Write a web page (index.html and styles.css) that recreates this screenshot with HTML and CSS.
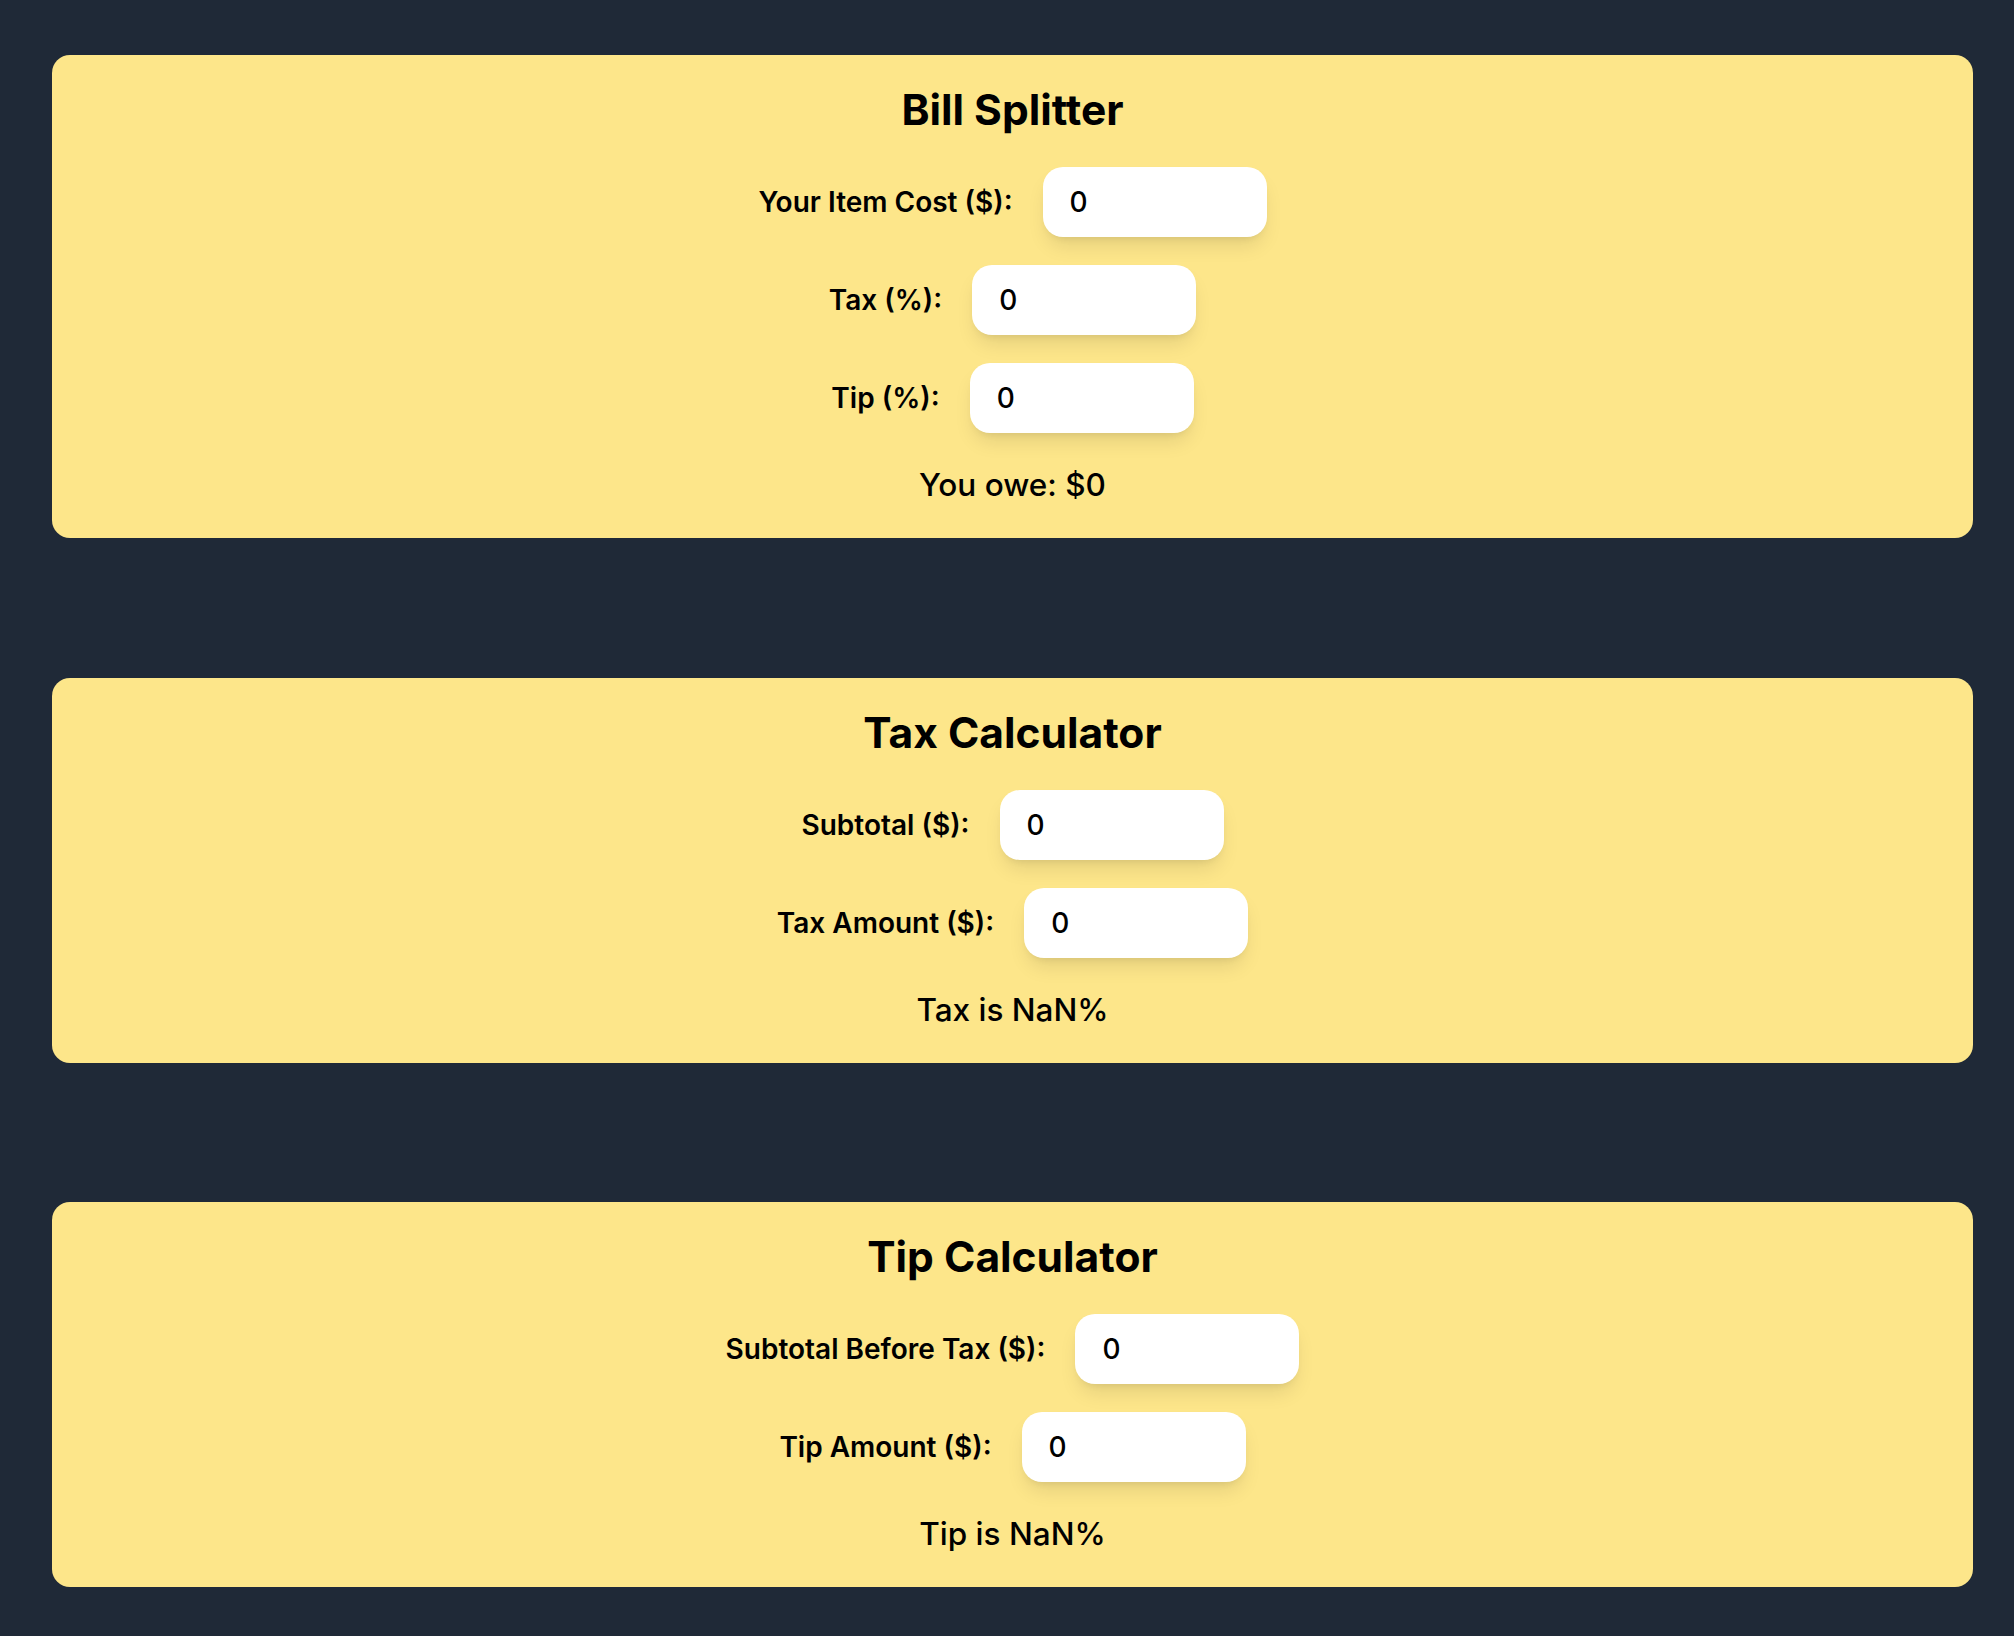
FILE: index.html
```html
<!DOCTYPE html>
<html lang="en">
<head>
<meta charset="utf-8">
<title>Calculators</title>
<link rel="stylesheet" href="styles.css">
</head>
<body>
<main class="page">
  <section class="card">
    <h1 class="card-title">Bill Splitter</h1>
    <div class="fields">
      <div class="field">
        <label class="field-label" for="cost">Your Item Cost ($):</label>
        <input class="field-input" id="cost" type="text" value="0">
      </div>
      <div class="field">
        <label class="field-label" for="tax">Tax (%):</label>
        <input class="field-input" id="tax" type="text" value="0">
      </div>
      <div class="field">
        <label class="field-label" for="tip">Tip (%):</label>
        <input class="field-input" id="tip" type="text" value="0">
      </div>
    </div>
    <p class="result">You owe: $0</p>
  </section>

  <section class="card">
    <h1 class="card-title">Tax Calculator</h1>
    <div class="fields">
      <div class="field">
        <label class="field-label" for="subtotal">Subtotal ($):</label>
        <input class="field-input" id="subtotal" type="text" value="0">
      </div>
      <div class="field">
        <label class="field-label" for="taxamt">Tax Amount ($):</label>
        <input class="field-input" id="taxamt" type="text" value="0">
      </div>
    </div>
    <p class="result">Tax is NaN%</p>
  </section>

  <section class="card">
    <h1 class="card-title">Tip Calculator</h1>
    <div class="fields">
      <div class="field">
        <label class="field-label" for="subbefore">Subtotal Before Tax ($):</label>
        <input class="field-input" id="subbefore" type="text" value="0">
      </div>
      <div class="field">
        <label class="field-label" for="tipamt">Tip Amount ($):</label>
        <input class="field-input" id="tipamt" type="text" value="0">
      </div>
    </div>
    <p class="result">Tip is NaN%</p>
  </section>
</main>
</body>
</html>
```

FILE: styles.css
```css
* {
  box-sizing: border-box;
}

html, body {
  margin: 0;
  padding: 0;
  background: #1f2937;
}

body {
  font-family: Inter, "Noto Sans", "Liberation Sans", sans-serif;
  color: #000;
}

.page {
  display: flex;
  flex-direction: column;
  gap: 139.5px;
  padding: 55px 41px 49px 52px;
}

.card {
  background: #fde68a;
  border-radius: 18px;
  padding: 31px 20px 33px;
  display: flex;
  flex-direction: column;
  align-items: center;
}

.card-title {
  margin: 0 0 33px;
  font-size: 42.5px;
  line-height: 48px;
  font-weight: 700;
}

.fields {
  display: flex;
  flex-direction: column;
  align-items: center;
  gap: 28px;
}

.field {
  display: flex;
  align-items: center;
  gap: 30px;
}

.field-label {
  font-size: 28px;
  font-weight: 600;
}

.field-input {
  width: 224px;
  height: 70px;
  border: none;
  outline: none;
  border-radius: 20px;
  background: #fff;
  padding: 0 27px;
  font-family: inherit;
  font-size: 28px;
  font-weight: 500;
  color: #000;
  box-shadow: 0 12px 20px -4px rgba(0, 0, 0, 0.1), 0 5px 8px -5px rgba(0, 0, 0, 0.1);
}

.result {
  margin: 32px 0 0;
  font-size: 31.5px;
  line-height: 40px;
  font-weight: 500;
}
```
